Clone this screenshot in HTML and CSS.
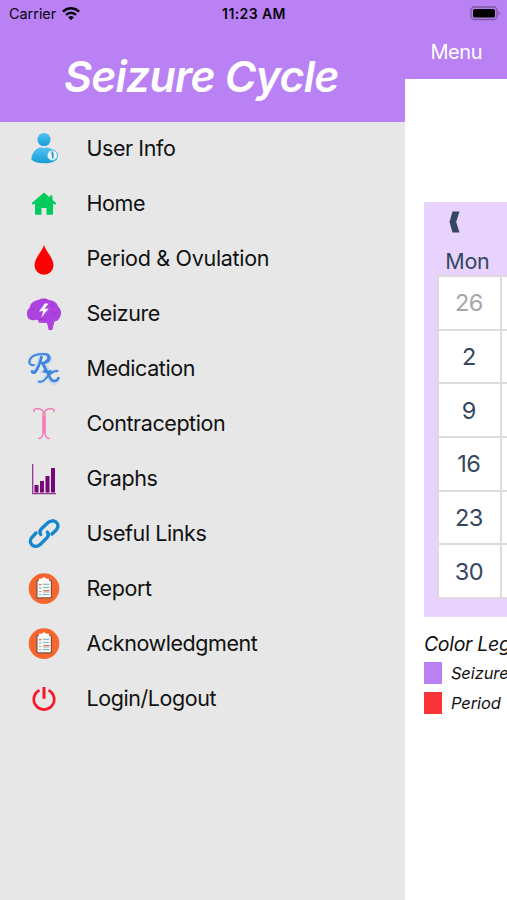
FILE: index.html
```html
<!DOCTYPE html>
<html lang="en">
<head>
<meta charset="utf-8">
<title>Seizure Cycle</title>
<link rel="stylesheet" href="styles.css">
</head>
<body>
<div class="phone">
  <header class="status">
    <div class="carrier"><span>Carrier</span>
      <svg width="18" height="14" viewBox="0 0 18 14" fill="none" stroke="#08040c" stroke-width="2.5"><path d="M.9 4.6C5.5.1 12.500.1 17.100 4.600M4 7.900c2.900-2.900 7.100-2.900 10 0"/><path d="M6.200 10.300Q9 7.700 11.800 10.300L9 13.200z" fill="#08040c" stroke="none"/></svg>
    </div>
    <span class="time">11:23 AM</span>
    <svg class="battery" width="31" height="15" viewBox="0 0 31 15"><rect x="1" y="1" width="26" height="12.500" rx="3.500" fill="none" stroke="#7e579f" stroke-width="1.300"/><rect x="3" y="3" width="22" height="8.500" rx="1.600" fill="#000"/><path d="M28.500 4.800q2.500 2.400 0 4.900z" fill="#7e579f"/></svg>
  </header>
  <div class="panes">
    <aside class="drawer">
      <h1 class="brand">Seizure Cycle</h1>
      <nav class="menu">
        <a class="item"><svg class="icon" viewBox="0 0 36 36"><defs><linearGradient id="person" x2="0" y2="1"><stop stop-color="#55c4f3"/><stop offset="1" stop-color="#159bd5"/></linearGradient></defs><circle cx="18" cy="9.500" r="6.600" fill="url(#person)"/><path d="M5.300 29.500c.3-6.500 4.500-11.500 9.700-12.300q3 1.600 6 0c5 .7 9.500 5.500 10 12-5 5.500-20 5.500-25.700.3z" fill="url(#person)"/><circle cx="26.300" cy="25.300" r="5.200" fill="#e8f4fa" stroke="#4db5df"/><path d="M25.300 24.100h1.500v4.300M26.400 21.500v1.500" fill="none" stroke="#248cbb" stroke-width="1.500"/></svg><span>User Info</span></a>
        <a class="item"><svg class="icon" viewBox="0 0 36 36"><path d="M18 7.500 5.500 18.200l1.400 1.500L9 18.600v11.200h6.500v-6.700h5v6.700H27V18.600l2.100 1.100 1.400-1.500-4-3.300V10.500h-2.700v2z" fill="#00cb5c"/></svg><span>Home</span></a>
        <a class="item wide"><svg class="icon" viewBox="0 0 36 36"><path d="M18 5c1.500 6 9.500 13 9.500 20.300a9.500 9.500 0 0 1-19 0C8.500 18 16.500 11 18 5z" fill="#fe0000"/></svg><span>Period &amp; Ovulation</span></a>
        <a class="item"><svg class="icon" viewBox="0 0 36 36"><path d="M2.500 23.500C-.3 20 .8 15 3.500 13 4 8.500 8 5.300 12.500 5c3-2 8-2 11 .3 4 0 7.500 2.400 8.500 6 3.500 3 4 8 1.500 11.500-1 2.300-2.500 3.500-5 3.700L26.300 35h-3.600l-1.700-7-8.200-.3c-.6-2.200-.8-2.700-1.500-3.200-3 1.300-6.500 1-9-1z" fill="#ae42df"/><path d="M18.800 8.500 13 16.500l4.300-.5-2 6.500 7.500-9-4.200.4 3.900-5.400z" fill="#fff"/><path d="M11.500 24.500h8m-15-11q3 2 4-1m18-4q-2 2 1 4m2 6q-3-1-4 2" fill="none" stroke="#9234c2" stroke-width=".8"/></svg><span>Seizure</span></a>
        <a class="item"><svg class="icon" viewBox="0 0 36 36"><g fill="none" stroke="#a7cdf5" stroke-width="4" stroke-linecap="round" opacity=".4"><path d="M14 6Q13 14 8 22M5 15C1 7 9 4 16 4c12 0 11 10 1 9l7 9M16 22q5-2 8 7t8 0M31 21q-7-1-11 6t-8 5"/></g><g fill="none" stroke="#3f85de" stroke-linecap="round" stroke-linejoin="round"><path d="M15.500 7c-1.500 6-3 11-6 14.500-1.300 1.500-3.300 1.300-3.500-.2" stroke-width="2.800"/><path d="M8 15c-4.500 1-6-3-3.500-6.500C7.500 4.500 13 4 17 4c9-.5 8.500 8.500 1 9h-3" stroke-width="2"/><path d="M21.500 5c2.500 2.200 1 5.500-2 7M16.500 13l4 8q1.500 1.700 4 .5" stroke-width="2.900"/><path d="M18 21.500q3-1 5 4t4.500 5.500q3.500.5 5-3" stroke-width="2.500"/><path d="M31.500 21c-5-.5-9 4-12 8q-3 3.500-6.500 2.500" stroke-width="1.900"/></g></svg><span>Medication</span></a>
        <a class="item"><svg class="icon" viewBox="0 0 36 36"><g fill="none" stroke="#f37db8" stroke-width="1.500" stroke-linecap="round"><path d="M8 6.500C7 5 9 3.500 12 3.700c3.500.2 5.800 2 6 5.600.2-3.600 2.500-5.400 6-5.600 3-.2 5 1.300 4 2.800M17 9v19q0 4.500-4 5.500M19 9v19q0 4.500 4 5.500"/></g><path d="M16.300 11h3.400v17h-3.400z" fill="#f58dc0"/><path d="M18 11v17" stroke="#e85fa8" stroke-width=".7"/></svg><span>Contraception</span></a>
        <a class="item"><svg class="icon" viewBox="0 0 36 36"><path d="M6.700 4v29.600H30" fill="none" stroke="#963496" stroke-width="1.300"/><path d="M8.500 25h4v7.500h-4zm5.500-4h4v11.500h-4zm5.500-5h4v16.500h-4zM25 8h4v24.500h-4z" fill="#790479"/></svg><span>Graphs</span></a>
        <a class="item"><svg class="icon" viewBox="0 0 36 36"><g fill="none" stroke="#1687cc" stroke-width="3.400" stroke-linecap="round"><path d="M14.800 19.500c-1.600-2-1-4 .7-5.700l6.300-6c5.500-5.200 13.500.8 8.700 6.800L26 19"/><path d="M21.300 17c1.700 2 1.300 4-.5 5.900l-6.300 6.300C9 34.500 1 28.500 5.800 22.500L10 18"/></g></svg><span>Useful Links</span></a>
        <a class="item"><svg class="icon" viewBox="0 0 36 36"><g id="clipboard"><circle cx="18" cy="18.600" r="15.300" fill="#f8662f"/><rect x="10.300" y="10" width="15.700" height="18.500" rx="1.300" fill="#75534b"/><path d="M11.500 10.800h13.300v16.500H11.500z" fill="#f4f6f2"/><path d="M13 8.800h2.600q2.400-3 4.800 0H23v2.700H13z" fill="#fff"/><path d="M13 14.700h2.500M17.500 20.700h6" stroke="#f36c60" stroke-width="1.300"/><path d="M17 14.300h6M13 18h2.500m1.500-.5h6M17 24.500h6" stroke="#6fb8bd" stroke-width="1"/><path d="M13 21.500h2.500M13 24.500h2.500M17 22h6" stroke="#a1adaa" stroke-width=".9"/></g></svg><span>Report</span></a>
        <a class="item"><svg class="icon" viewBox="0 0 36 36"><use href="#clipboard"/></svg><span>Acknowledgment</span></a>
        <a class="item"><svg class="icon" viewBox="0 0 36 36"><path d="M13.500 10.200a10.200 10.200 0 1 0 9 0" fill="none" stroke="#f91626" stroke-width="2.800"/><path d="M18 7v11.800" stroke="#f91626" stroke-width="3"/></svg><span>Login/Logout</span></a>
      </nav>
    </aside>
    <main class="page">
      <div class="navbar"><span>Menu</span></div>
      <section class="calendar">
        <svg class="prev" width="11" height="22" viewBox="0 0 11 22"><path d="M3.500.5h7L7.200 11l3.300 10.500h-7L.5 11z" fill="#354760"/></svg>
        <div class="weekday">Mon</div>
        <div class="days">
          <div class="day muted">26</div><div class="day"></div>
          <div class="day">2</div><div class="day"></div>
          <div class="day">9</div><div class="day"></div>
          <div class="day">16</div><div class="day"></div>
          <div class="day">23</div><div class="day"></div>
          <div class="day">30</div><div class="day"></div>
        </div>
      </section>
      <section class="legend">
        <h2>Color Legend</h2>
        <div class="entry"><i class="swatch seizure"></i><span>Seizure</span></div>
        <div class="entry"><i class="swatch period"></i><span>Period</span></div>
      </section>
    </main>
  </div>
</div>
</body>
</html>
```
FILE: styles.css
```css
* { box-sizing: border-box; }
body { margin: 0; font-family: Inter, "Liberation Sans", sans-serif; color: #111; }
svg { display: block; flex: none; }
.phone { width: 507px; height: 900px; overflow: hidden; background: #fff; display: flex; flex-direction: column; }
.status { height: 28px; background: #ba81f5; display: grid; grid-template-columns: 1fr auto 1fr; align-items: center; padding: 0 6px 1px 9px; color: #08040c; }
.carrier { display: flex; align-items: center; gap: 6px; font-size: 14.4px; letter-spacing: 0; }
.time { font-size: 14px; font-weight: 600; letter-spacing: .4px; margin-right: 2px; }
.battery { justify-self: end; }
.panes { flex: 1; display: flex; min-height: 0; }
.drawer { width: 405.4px; flex: none; background: #e7e7e7; }
.brand { margin: 0; height: 94px; background: #ba81f5; color: #fff; font-size: 43px; line-height: 94px; font-style: italic; font-weight: 600; letter-spacing: -.8px; padding-left: 64px; padding-top: 1px; white-space: nowrap; }
.menu { display: flex; flex-direction: column; }
.item { height: 55px; display: flex; align-items: center; gap: 25px; padding: 0 0 3px 25.500px; font-size: 21.5px; letter-spacing: -.43px; white-space: nowrap; }
.item span { padding-bottom: 1px; }
.wide { letter-spacing: -.3px; }
.icon { width: 36px; height: 36px; }
.page { flex: 1; min-width: 0; overflow: hidden; }
.navbar { height: 51px; background: #ba81f5; color: #fff; font-size: 20px; line-height: 49px; padding-left: 25px; letter-spacing: -.4px; }
.calendar { margin: 123px 0 0 18.500px; height: 415px; background: #e7d3fd; padding: 9px 0 0 13px; color: #354760; overflow: hidden; }
.prev { margin-left: 12px; }
.weekday { margin-top: 15px; height: 27px; width: 61px; line-height: 26px; text-align: center; font-size: 21.5px; letter-spacing: -.3px; }
.days { width: 128px; height: 324px; display: grid; grid-template-columns: 61px 61px; grid-template-rows: repeat(6, 1fr); gap: 2px; padding: 2px; background: #dedade; }
.day { background: #fff; display: flex; align-items: center; justify-content: center; padding-right: 1px; font-size: 23.5px; letter-spacing: -.5px; }
.muted { color: #a6a6a6; }
.legend { margin: 13px 0 0 18.500px; font-style: italic; white-space: nowrap; }
.legend h2 { margin: 0; font-size: 19.500px; line-height: 28px; font-weight: 400; letter-spacing: -.3px; }
.entry { display: flex; align-items: center; gap: 9px; height: 22px; margin: 4px 0 8px; font-size: 16.500px; letter-spacing: -.1px; }
.entry span { padding-bottom: 1px; }
.swatch { width: 18px; height: 22px; flex: none; }
.seizure { background: #ba81f5; }
.period { background: #f83436; }
```
